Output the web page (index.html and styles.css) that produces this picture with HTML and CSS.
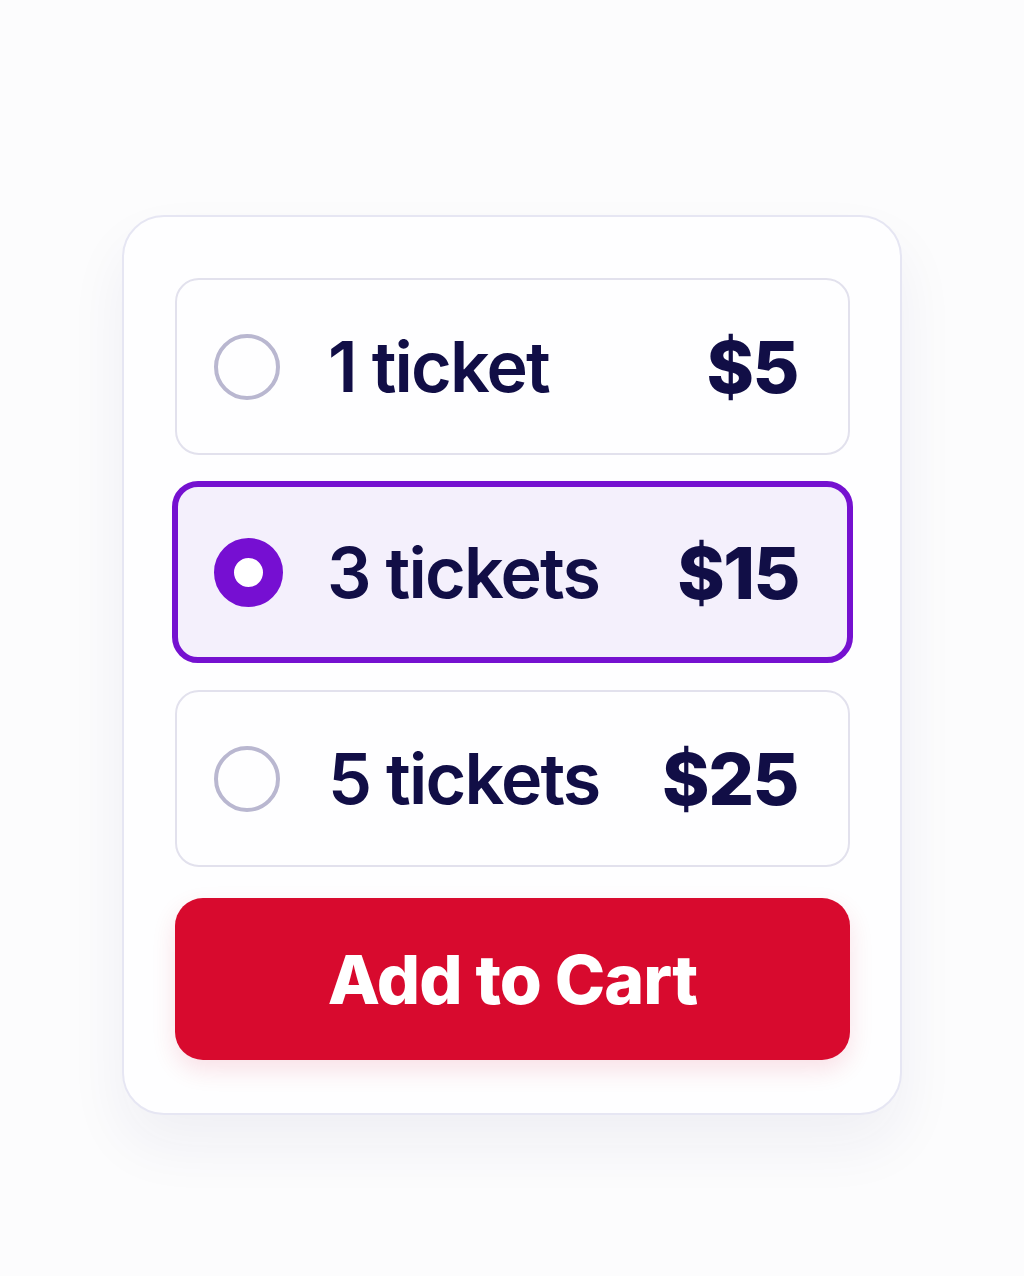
FILE: index.html
```html
<!DOCTYPE html>
<html lang="en">
<head>
<meta charset="utf-8">
<title>Tickets</title>
<link rel="stylesheet" href="styles.css">
</head>
<body>
<main class="stage">
  <section class="card">
    <label class="option">
      <span class="radio"></span>
      <span class="label">1 ticket</span>
      <span class="price">$5</span>
    </label>
    <label class="option selected">
      <span class="radio"></span>
      <span class="label">3 tickets</span>
      <span class="price">$15</span>
    </label>
    <label class="option">
      <span class="radio"></span>
      <span class="label">5 tickets</span>
      <span class="price">$25</span>
    </label>
    <button class="cart" type="button">Add to Cart</button>
  </section>
</main>
</body>
</html>
```
FILE: styles.css
```css
html, body {
  margin: 0;
  padding: 0;
}
body {
  width: 1024px;
  height: 1276px;
  background: #fcfcfd;
  font-family: Inter, "Noto Sans", sans-serif;
  color: #110e46;
}
.stage {
  padding-top: 215px;
  padding-left: 122px;
}
.card {
  box-sizing: border-box;
  width: 780px;
  height: 900px;
  border: 2px solid #e6e6f3;
  border-radius: 42px;
  background: #fefeff;
  box-shadow: 0 30px 60px rgba(40, 40, 110, 0.06);
  padding: 61px 50px 0 51px;
  display: flex;
  flex-direction: column;
  gap: 30px;
}
.option {
  box-sizing: border-box;
  height: 177px;
  border: 2px solid #e2e1ed;
  border-radius: 24px;
  display: flex;
  align-items: center;
  padding: 0 50px 0 37px;
  background: #fefeff;
}
.option.selected {
  height: 182px;
  margin: -4px -3px -3px -3px;
  border: 6px solid #7511d0;
  background: #f4f0fc;
  padding-left: 36px;
  padding-right: 48px;
  border-radius: 26px;
}
.radio {
  box-sizing: border-box;
  width: 66px;
  height: 66px;
  border-radius: 50%;
  border: 4px solid #b9b7d0;
  flex: none;
}
.selected .radio {
  width: 69px;
  height: 69px;
  border: 20px solid #760fd2;
  background: #ffffff;
}
.label {
  margin-left: 48px;
  font-size: 70px;
  font-weight: 600;
  letter-spacing: -1.8px;
  flex: 1;
}
.selected .label {
  margin-left: 44px;
}
.price {
  font-size: 72px;
  font-weight: 800;
  letter-spacing: -1.5px;
}
.cart {
  margin-top: 1px;
  height: 162px;
  border: none;
  border-radius: 28px;
  background: #d80a2e;
  color: #ffffff;
  font-family: Inter, "Noto Sans", sans-serif;
  font-size: 68px;
  font-weight: 800;
  letter-spacing: -1px;
  box-shadow: 0 10px 24px rgba(216, 10, 46, 0.12);
}
```
